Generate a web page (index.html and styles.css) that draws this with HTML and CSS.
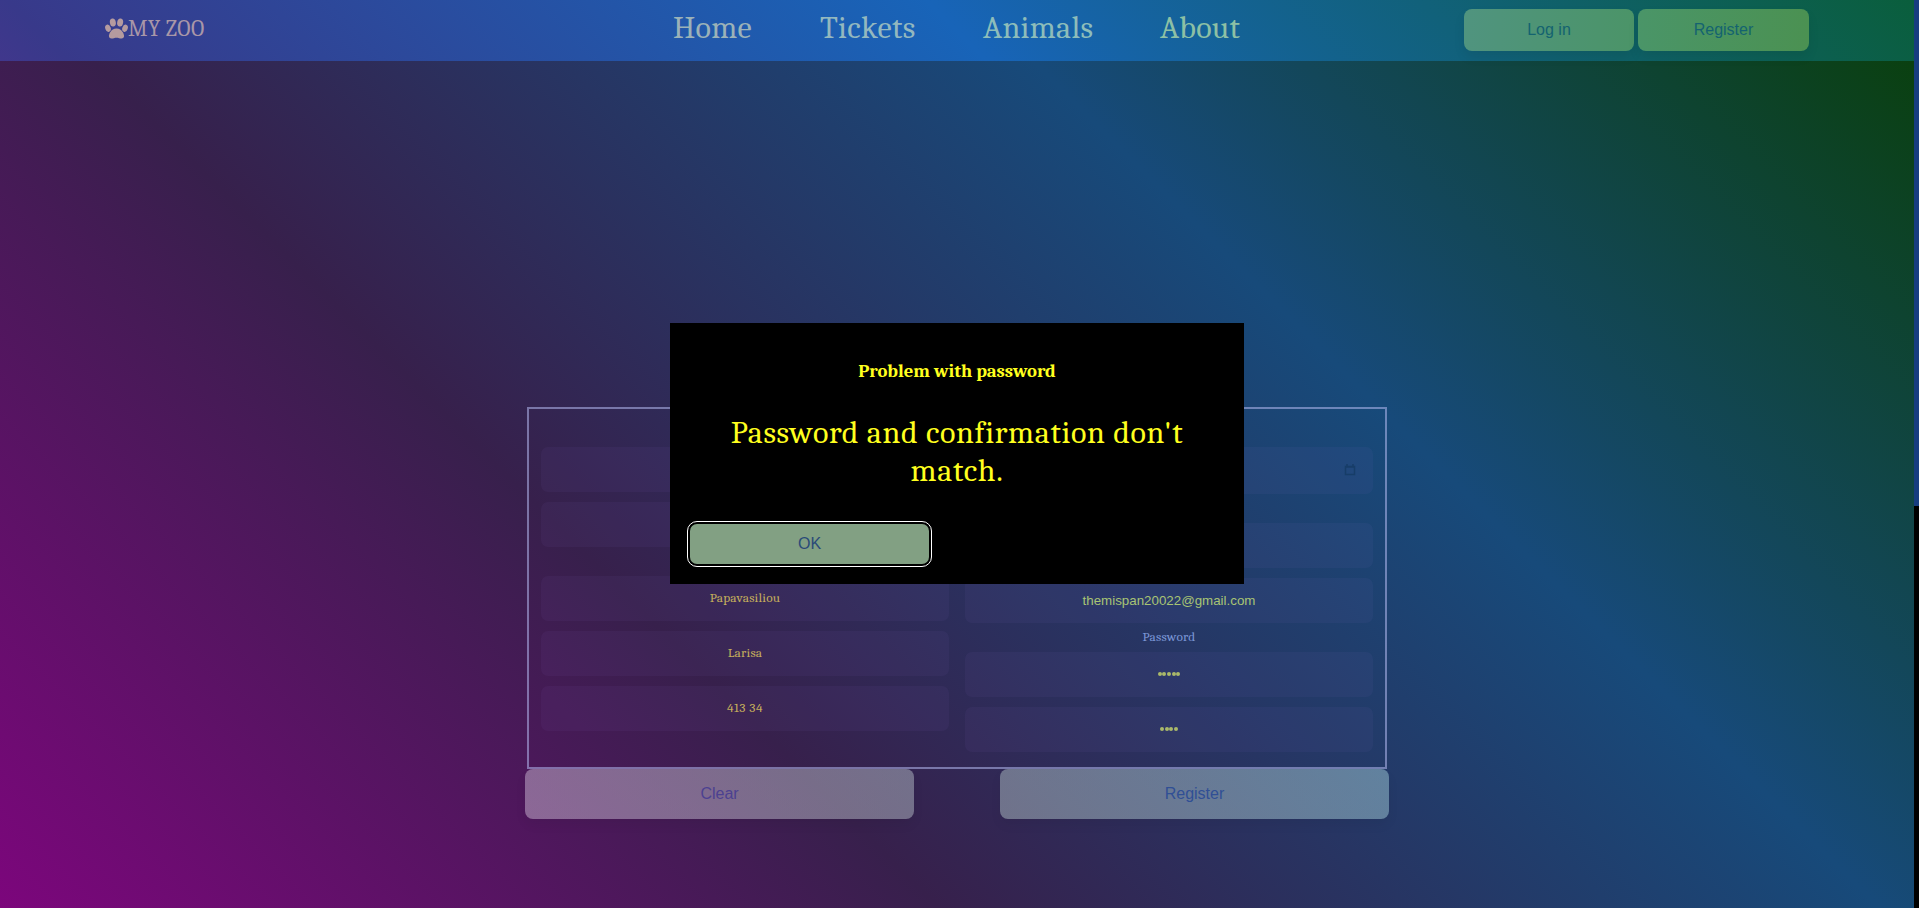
FILE: index.html
```html
<!DOCTYPE html>
<html lang="en">
<head>
<meta charset="utf-8">
<title>My Zoo</title>
<link rel="stylesheet" href="styles.css">
</head>
<body>
<div class="page">
  <header class="header">
    <div class="logo">
      <svg class="paw" viewBox="0 0 24 21" width="23" height="21">
        <ellipse cx="8.2" cy="4.300" rx="3.100" ry="4.200" transform="rotate(-10 8.2 4.3)"/>
        <ellipse cx="15.8" cy="4.300" rx="3.100" ry="4.200" transform="rotate(10 15.8 4.3)"/>
        <ellipse cx="3.1" cy="10.200" rx="2.800" ry="3.900" transform="rotate(-20 3.1 10.2)"/>
        <ellipse cx="20.9" cy="10.200" rx="2.800" ry="3.900" transform="rotate(20 20.9 10.2)"/>
        <path d="M12 10.500c3 0 5 1.300 6.400 3.600 1 1.600 1.500 3 1.500 4.300 0 1.700-1 2.500-2.600 2.500-2 0-3.300-.8-5.300-.8s-3.300.8-5.300.8c-1.600 0-2.600-.8-2.600-2.500 0-1.300.5-2.700 1.500-4.300 1.400-2.300 3.400-3.600 6.400-3.600z"/>
      </svg>
      <span class="brand">MY ZOO</span>
    </div>
    <nav class="nav">
      <a class="home">Home</a>
      <a class="tickets">Tickets</a>
      <a class="animals">Animals</a>
      <a class="about">About</a>
    </nav>
    <div class="account">
      <button class="login">Log in</button>
      <button class="signup">Register</button>
    </div>
  </header>
  <main class="main">
    <form class="form">
      <div class="column">
        <div class="field"></div>
        <div class="field"></div>
        <div class="label"></div>
        <div class="field">Papavasiliou</div>
        <div class="field">Larisa</div>
        <div class="field zip">413 34</div>
      </div>
      <div class="column">
        <div class="field date">
          <svg class="calendar" viewBox="0 0 12 12" width="12" height="12"><path d="M1.500 2.500h9v8h-9zM1 3h10M3 0v2M9 0v2"/></svg>
        </div>
        <div class="label"></div>
        <div class="field"></div>
        <div class="field email">themispan20022@gmail.com</div>
        <div class="label">Password</div>
        <div class="field secret"><span class="dots"><i></i><i></i><i></i><i></i><i></i></span></div>
        <div class="field secret"><span class="dots"><i></i><i></i><i></i><i></i></span></div>
      </div>
    </form>
    <div class="actions">
      <button class="clear">Clear</button>
      <button class="submit">Register</button>
    </div>
  </main>
</div>
<div class="scrollbar"><div class="thumb"></div></div>
<div class="dialog">
  <h3 class="title">Problem with password</h3>
  <p class="message">Password and confirmation don't match.</p>
  <button class="ok">OK</button>
</div>
</body>
</html>
```

FILE: styles.css
```css
* { box-sizing: border-box; }

body {
  margin: 0;
  height: 908px;
  display: flex;
  overflow: hidden;
  background: #000;
  font-family: Cambria, Caladea, "Liberation Serif", serif;
}

button {
  border: 0;
  padding: 0;
  border-radius: 8px;
  font: 16px "Liberation Sans", Arial, sans-serif;
}

.page {
  width: 1914px;
  height: 908px;
  background: linear-gradient(45deg, #7c067c 0%, #37204c 33.3%, #174a7a 66.6%, #0a4010 98%);
}

.header {
  height: 61px;
  display: flex;
  align-items: flex-start;
  background: linear-gradient(45deg, #40378c 0%, #38398a 3.5%, #1864b8 50%, #0a5e3c 100%);
}

.logo {
  display: flex;
  margin: 18px 0 0 105px;
  width: 568px;
}

.paw { fill: #b59b9f; }

.brand {
  color: #a997a8;
  font-size: 22px;
  line-height: 22px;
  letter-spacing: .4px;
}

.nav {
  display: flex;
  width: 791px;
  padding-top: 9px;
  font-size: 32px;
  line-height: 38px;
  letter-spacing: .3px;
}

.home { width: 147px; color: #9bb2b8; }
.tickets { width: 163px; color: #93b8bf; }
.animals { width: 177px; color: #8dbdba; }
.about { color: #8dc0a5; }

.account {
  display: flex;
  gap: 4px;
  padding-top: 9px;
}

.login, .signup {
  width: 170px;
  height: 42px;
  color: #146370;
  background: linear-gradient(90deg, #50947f, #4b9468);
  box-shadow: 0 6px 12px rgba(0, 0, 0, .07);
}

.signup {
  width: 171px;
  background: linear-gradient(90deg, #4a9568, #4b9152);
}

.main {
  padding: 346px 0 0 525px;
}

.form {
  width: 860px;
  height: 362px;
  margin-left: 2px;
  padding: 38px 12px 0;
  display: flex;
  gap: 16px;
  border: 2px solid rgba(180, 185, 240, .55);
}

.column {
  width: 408px;
  display: flex;
  flex-direction: column;
}

.field {
  height: 45px;
  margin-bottom: 10px;
  padding-bottom: 2px;
  border-radius: 7px;
  background: rgba(155, 125, 215, .06);
  color: #c4ae5c;
  font-size: 13.33px;
  letter-spacing: .2px;
  display: flex;
  align-items: center;
  justify-content: center;
}

.zip { letter-spacing: .5px; }

.date {
  height: 47px;
  justify-content: flex-end;
  padding: 0 17px 2px 0;
}

.calendar { fill: none; stroke: #173d68; stroke-width: 1.5; }

.label {
  height: 19px;
  color: #7b96d6;
  font-size: 13.33px;
  letter-spacing: .2px;
  line-height: 7px;
  text-align: center;
}

.email {
  padding: 0;
  color: #a8c474;
  font: 13.33px "Liberation Sans", Arial, sans-serif;
  letter-spacing: 0;
}

.secret { padding-bottom: 1px; }

.dots { display: flex; gap: .67px; }
.dots i { width: 4px; height: 4px; border-radius: 50%; background: #aab96a; }

.actions {
  display: flex;
  gap: 86px;
}

.clear, .submit {
  width: 389px;
  height: 50px;
  color: #4c4191;
  background: linear-gradient(90deg, rgba(232, 223, 238, .4), rgba(210, 225, 225, .4));
  box-shadow: 0 6px 12px rgba(0, 0, 0, .05);
}

.submit {
  color: #304f95;
  background: linear-gradient(90deg, rgba(205, 228, 222, .4), rgba(190, 237, 240, .4));
}

.scrollbar { width: 5px; background: #000; }
.thumb { height: 506px; background: #173d80; }

.dialog {
  position: absolute;
  left: 670px;
  top: 323px;
  width: 574px;
  height: 261px;
  padding: 36px 20px 0;
  background: #000;
  color: #ffff1e;
  text-align: center;
}

.title {
  margin: 0;
  font-size: 18.72px;
  line-height: 24px;
  letter-spacing: -.05px;
}

.message {
  margin: 31px 30px 0;
  font-size: 32px;
  line-height: 38px;
  letter-spacing: .65px;
}

.ok {
  display: block;
  width: 239px;
  height: 40px;
  margin-top: 34px;
  border-radius: 7px;
  background: #82a083;
  color: #2a4a78;
  outline: 1px solid #fff;
  outline-offset: 2px;
}
```
